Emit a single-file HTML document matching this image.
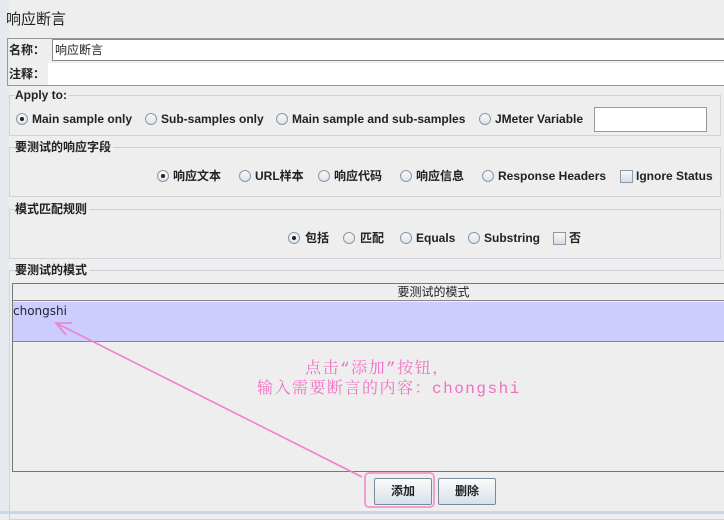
<!DOCTYPE html>
<html><head><meta charset="utf-8"><style>
*{margin:0;padding:0;box-sizing:border-box}
body{width:724px;height:514px;background:#eeeeee;position:relative;overflow:hidden;font-family:"Liberation Sans","Noto Sans CJK SC",sans-serif;font-size:12px;color:#222}
.a{position:absolute;white-space:nowrap;line-height:14px}
.b{font-weight:bold}
.fs{position:absolute;border:1px solid #d0d4d8;border-top-color:#c8d0d8}
.lg{position:absolute;background:#eeeeee;font-weight:bold;padding-right:2px;font-size:12px;line-height:14px}
.r{position:absolute;width:12px;height:12px;border:1px solid #8a98a8;border-radius:50%;background:linear-gradient(#f8f8f8,#dde4ea)}
.r.on::after{content:"";position:absolute;left:3px;top:3px;width:4px;height:4px;border-radius:50%;background:#222}
.c{position:absolute;width:13px;height:13px;border:1px solid #8a98a8;background:linear-gradient(#f8f8f8,#d4dde6)}
.in{position:absolute;background:#fff;border:1px solid #999}
.btn{position:absolute;width:58px;height:27px;border:1px solid #7a8a9a;background:linear-gradient(#fbfcfd,#d6e0ea);font-weight:bold;text-align:center;line-height:25px;font-size:12px;border-radius:2px}
.pk{position:absolute;white-space:nowrap;font-size:16px;line-height:18px;color:#f070c0;font-family:'Liberation Mono','Noto Serif CJK SC',monospace;letter-spacing:1.5px}
</style></head><body>
<div class="a" style="left:0;top:0;width:9px;height:514px;background:#e6eaee"></div>
<div class="a" style="left:6px;top:11px;font-size:15px;line-height:18px">响应断言</div>
<div class="a" style="left:7px;top:38px;width:720px;height:48px;border:1px solid #999"></div>
<div class="a b" style="left:9px;top:43px">名称：</div>
<div class="in" style="left:52px;top:39px;width:680px;height:22px;border-color:#888"></div>
<div class="a" style="left:55px;top:43px">响应断言</div>
<div class="a b" style="left:9px;top:67px">注释：</div>
<div class="in" style="left:48px;top:63px;width:680px;height:22px;border:none"></div>

<div class="fs" style="left:9px;top:95px;width:712px;height:41px"></div>
<div class="lg" style="left:15px;top:88px">Apply to:</div>
<div class="r on" style="left:16px;top:113px"></div><div class="a b" style="left:32px;top:112px">Main sample only</div>
<div class="r" style="left:145px;top:113px"></div><div class="a b" style="left:161px;top:112px">Sub-samples only</div>
<div class="r" style="left:276px;top:113px"></div><div class="a b" style="left:292px;top:112px">Main sample and sub-samples</div>
<div class="r" style="left:479px;top:113px"></div><div class="a b" style="left:495px;top:112px">JMeter Variable</div>
<div class="in" style="left:594px;top:107px;width:113px;height:25px;border-color:#999"></div>

<div class="fs" style="left:9px;top:147px;width:712px;height:50px"></div>
<div class="lg" style="left:15px;top:140px">要测试的响应字段</div>
<div class="r on" style="left:157px;top:170px"></div><div class="a b" style="left:173px;top:169px">响应文本</div>
<div class="r" style="left:239px;top:170px"></div><div class="a b" style="left:255px;top:169px">URL样本</div>
<div class="r" style="left:318px;top:170px"></div><div class="a b" style="left:334px;top:169px">响应代码</div>
<div class="r" style="left:400px;top:170px"></div><div class="a b" style="left:416px;top:169px">响应信息</div>
<div class="r" style="left:482px;top:170px"></div><div class="a b" style="left:498px;top:169px">Response Headers</div>
<div class="c" style="left:620px;top:170px"></div><div class="a b" style="left:636px;top:169px">Ignore Status</div>

<div class="fs" style="left:9px;top:209px;width:712px;height:50px"></div>
<div class="lg" style="left:15px;top:202px">模式匹配规则</div>
<div class="r on" style="left:288px;top:232px"></div><div class="a b" style="left:305px;top:231px">包括</div>
<div class="r" style="left:343px;top:232px"></div><div class="a b" style="left:360px;top:231px">匹配</div>
<div class="r" style="left:400px;top:232px"></div><div class="a b" style="left:416px;top:231px">Equals</div>
<div class="r" style="left:468px;top:232px"></div><div class="a b" style="left:484px;top:231px">Substring</div>
<div class="c" style="left:553px;top:232px"></div><div class="a b" style="left:569px;top:231px">否</div>

<div class="fs" style="left:9px;top:270px;width:720px;height:250px"></div>
<div class="lg" style="left:15px;top:263px">要测试的模式</div>
<div class="a" style="left:12px;top:283px;width:720px;height:189px;border:1px solid #777;background:#eeeeee"></div>
<div class="a" style="left:13px;top:284px;width:711px;height:17px;border-bottom:1px solid #888;text-align:center;line-height:17px;padding-left:130px">要测试的模式</div>
<div class="a" style="left:13px;top:302px;width:711px;height:40px;background:#ccccff;border-bottom:1px solid #888"></div>
<div class="a" style="left:13px;top:304px;font-family:'DejaVu Sans',sans-serif;font-size:12px;color:#223">chongshi</div>

<div class="pk" style="left:305px;top:360px">点击“添加”按钮，</div>
<div class="pk" style="left:257px;top:380px">输入需要断言的内容：chongshi</div>

<div class="btn" style="left:374px;top:478px">添加</div>
<div class="btn" style="left:438px;top:478px">删除</div>
<div class="a" style="left:364px;top:472px;width:71px;height:36px;border:2px solid #f0a0d0;border-radius:5px"></div>
<svg class="a" style="left:0;top:0" width="724" height="514">
<line x1="362" y1="477" x2="58" y2="324" stroke="#f080c8" stroke-width="1.6"/>
<polyline points="72,323 56,323 66,335" fill="none" stroke="#f080c8" stroke-width="1.6"/>
</svg>
<div class="a" style="left:0;top:511px;width:724px;height:3px;background:#c8d8e8"></div>
</body></html>
